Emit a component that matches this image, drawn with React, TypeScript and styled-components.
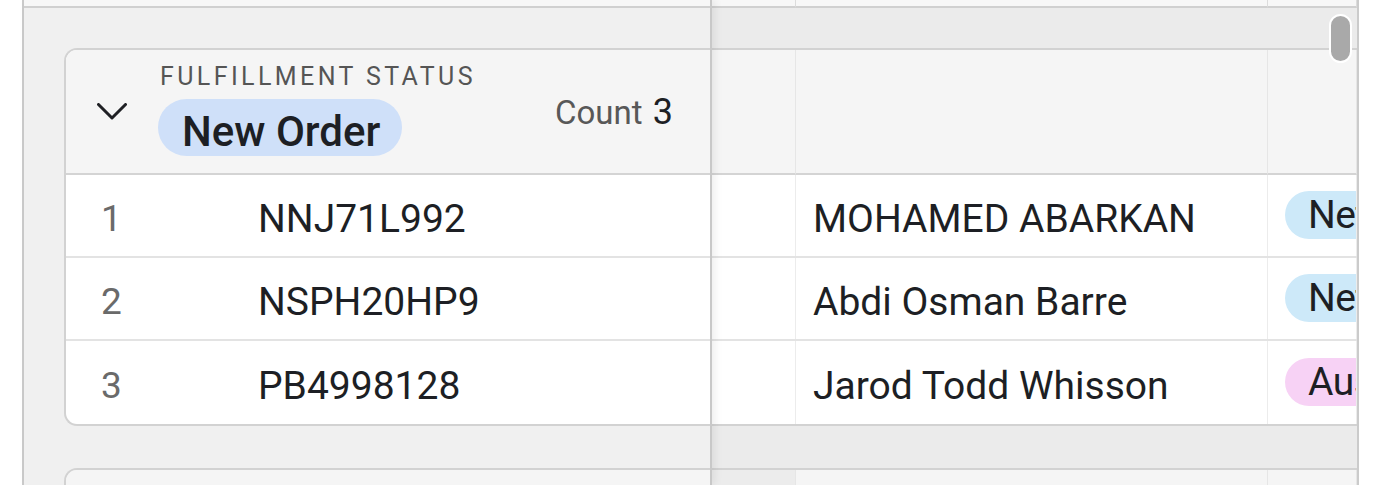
import React, { FC } from "react";
import styled, { createGlobalStyle } from "styled-components";

interface OrderRow {
  id: string;
  name: string;
  country: string;
  tone: "blue" | "pink";
}

const rows: OrderRow[] = [
  { id: "NNJ71L992", name: "MOHAMED ABARKAN", country: "Netherlands", tone: "blue" },
  { id: "NSPH20HP9", name: "Abdi Osman Barre", country: "Netherlands", tone: "blue" },
  { id: "PB4998128", name: "Jarod Todd Whisson", country: "Australia", tone: "pink" },
];

const toneColors = {
  blue: "#cde9f9",
  pink: "#f7d2f5",
};

const Chevron: FC = () => (
  <svg width="30" height="17" viewBox="0 0 30 17" fill="none">
    <path d="M1.5 1.5 L15 15 L28.5 1.5" stroke="#1f2024" strokeWidth="3" strokeLinecap="round" strokeLinejoin="round" />
  </svg>
);

const App: FC = () => {
  return (
    <>
      <GlobalStyle />
      <Frame>
        <Gutter />
        <LeftPane>
          <TopStrip />
          <Card>
            <GroupHeader>
              <ChevronCell>
                <Chevron />
              </ChevronCell>
              <TitleBlock>
                <FieldLabel>FULFILLMENT STATUS</FieldLabel>
                <StatusPill>New Order</StatusPill>
              </TitleBlock>
              <CountLabel>
                Count <CountValue>3</CountValue>
              </CountLabel>
            </GroupHeader>
            {rows.map((row, index) => (
              <LeftRow key={row.id} last={index === rows.length - 1}>
                <RowNumber>{index + 1}</RowNumber>
                <PrimaryCell>{row.id}</PrimaryCell>
              </LeftRow>
            ))}
          </Card>
          <Card>
            <GroupHeader />
          </Card>
        </LeftPane>
        <RightPane>
          <ColumnRow>
            <StripCell />
            <StripCell />
            <StripCell />
          </ColumnRow>
          <Block>
            <ColumnRow>
              <HeaderCell />
              <HeaderCell />
              <HeaderCell />
            </ColumnRow>
            {rows.map((row, index) => (
              <DataRow key={row.id} last={index === rows.length - 1}>
                <DataCell />
                <DataCell>{row.name}</DataCell>
                <DataCell>
                  <CountryPill style={{ background: toneColors[row.tone] }}>{row.country}</CountryPill>
                </DataCell>
              </DataRow>
            ))}
          </Block>
          <Block>
            <ColumnRow>
              <HeaderCell dim />
              <HeaderCell />
              <HeaderCell />
            </ColumnRow>
          </Block>
          <ScrollThumb />
        </RightPane>
        <Tail />
      </Frame>
    </>
  );
};

export default App;

const GlobalStyle = createGlobalStyle`
  body {
    margin: 0;
    background: #ffffff;
    font-family: Roboto, "Noto Sans", sans-serif;
    color: #1d1f24;
  }
`;

const Frame = styled.div`
  display: flex;
  height: 485px;
  overflow: hidden;
`;

const Gutter = styled.div`
  width: 22px;
  flex-shrink: 0;
  background: #ffffff;
  border-right: 2px solid #cbcbcb;
`;

const LeftPane = styled.div`
  position: relative;
  z-index: 2;
  width: 686px;
  flex-shrink: 0;
  background: #f0f0f0;
  border-right: 2px solid #c8c8c8;
  box-shadow: 3px 0 8px rgba(0, 0, 0, 0.07);
`;

const TopStrip = styled.div`
  height: 6px;
  background: #f7f7f7;
  border-bottom: 2px solid #d0d0d0;
`;

const Card = styled.div`
  margin: 40px 0 42px 40px;
  border: 2px solid #d2d2d2;
  border-right: none;
  border-radius: 13px 0 0 13px;
  background: #ffffff;
  overflow: hidden;
`;

const GroupHeader = styled.div`
  display: flex;
  align-items: center;
  height: 123px;
  background: #f5f5f5;
  border-bottom: 2px solid #d4d4d4;
  padding-right: 37px;
`;

const ChevronCell = styled.div`
  width: 93px;
  padding-left: 31px;
  box-sizing: border-box;
  display: flex;
  align-items: center;
  flex-shrink: 0;
`;

const TitleBlock = styled.div`
  flex: 1;
  display: flex;
  flex-direction: column;
  align-items: flex-start;
  gap: 7px;
  margin-top: -5px;
`;

const FieldLabel = styled.div`
  font-size: 25px;
  line-height: 30px;
  letter-spacing: 3.4px;
  color: #555555;
  margin-left: 1px;
`;

const StatusPill = styled.div`
  height: 57px;
  box-sizing: border-box;
  padding: 9px 22px 0 24px;
  line-height: 48px;
  font-size: 42px;
  font-weight: 500;
  color: #1d1f24;
  background: #cfe0f9;
  border-radius: 29px;
  margin-left: -1px;
`;

const CountLabel = styled.div`
  font-size: 33px;
  color: #585858;
`;

const CountValue = styled.span`
  font-size: 36px;
  color: #1d1f24;
  margin-left: 2px;
`;

const LeftRow = styled.div<{ last?: boolean }>`
  display: flex;
  align-items: center;
  height: 83px;
  box-sizing: border-box;
  padding-top: 6px;
  border-bottom: ${(p) => (p.last ? "none" : "2px solid #e3e3e3")};
`;

const RowNumber = styled.div`
  width: 192px;
  padding-left: 35px;
  box-sizing: border-box;
  font-size: 37px;
  color: #6a6a6a;
  flex-shrink: 0;
`;

const PrimaryCell = styled.div`
  font-size: 39px;
  color: #1d1f24;
`;

const RightPane = styled.div`
  position: relative;
  z-index: 1;
  width: 645px;
  flex-shrink: 0;
  background: #ebebeb;
  border-right: 2px solid #cbcbcb;
  overflow: hidden;
`;

const ColumnRow = styled.div`
  display: grid;
  grid-template-columns: 84px 472px 1fr;
`;

const StripCell = styled.div`
  height: 6px;
  background: #f7f7f7;
  border-right: 1px solid #dcdcdc;
  border-bottom: 2px solid #d0d0d0;
`;

const Block = styled.div`
  margin: 40px 0 42px;
  border-top: 2px solid #d2d2d2;
  border-bottom: 2px solid #d2d2d2;
  background: #ffffff;
`;

const HeaderCell = styled.div<{ dim?: boolean }>`
  height: 123px;
  background: ${(p) => (p.dim ? "#ececec" : "#f5f5f5")};
  border-right: 1px solid #e6e6e6;
  border-bottom: 2px solid #d4d4d4;
`;

const DataRow = styled(ColumnRow)<{ last?: boolean }>`
  height: 83px;
  box-sizing: border-box;
  border-bottom: ${(p) => (p.last ? "none" : "2px solid #e3e3e3")};
`;

const DataCell = styled.div`
  display: flex;
  align-items: center;
  padding: 6px 0 0 17px;
  border-right: 1px solid #ececec;
  font-size: 39px;
  white-space: nowrap;
  overflow: hidden;
  color: #1d1f24;
`;

const CountryPill = styled.span`
  height: 48px;
  margin-top: -8px;
  padding: 0 20px 0 23px;
  display: inline-flex;
  align-items: center;
  border-radius: 24px;
  font-size: 39px;
  letter-spacing: -0.5px;
`;

const ScrollThumb = styled.div`
  position: absolute;
  top: 14px;
  right: 5px;
  width: 19px;
  height: 45px;
  background: #a9a9a9;
  border: 2px solid #ffffff;
  border-radius: 12px;
`;

const Tail = styled.div`
  flex: 1;
  background: #ffffff;
`;
